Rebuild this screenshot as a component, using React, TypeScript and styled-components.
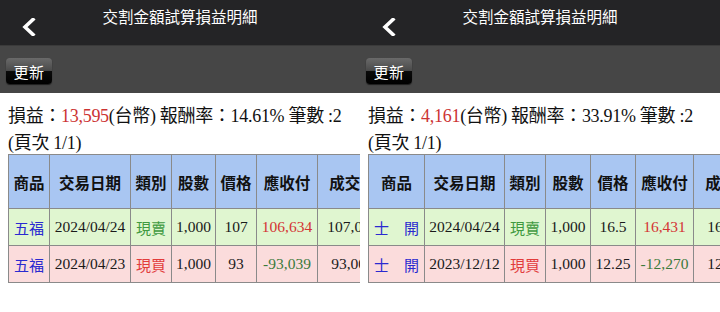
import React from 'react';
import styled, { createGlobalStyle } from 'styled-components';

const GlobalStyle = createGlobalStyle`
  html, body {
    margin: 0;
    padding: 0;
    background: #ffffff;
  }
`;

type Side = 'sell' | 'buy';

interface Trade {
  name: string;
  date: string;
  side: Side;
  qty: string;
  price: string;
  amount: string;
  cost: string;
}

interface PanelData {
  pnl: string;
  rate: string;
  count: number;
  widths: number[];
  rows: Trade[];
}

const headers = ['商品', '交易日期', '類別', '股數', '價格', '應收付', '成交價'];

const panels: PanelData[] = [
  {
    pnl: '13,595',
    rate: '14.61%',
    count: 2,
    widths: [41, 81, 41, 44, 41, 61, 70],
    rows: [
      { name: '五福', date: '2024/04/24', side: 'sell', qty: '1,000', price: '107', amount: '106,634', cost: '107,000' },
      { name: '五福', date: '2024/04/23', side: 'buy', qty: '1,000', price: '93', amount: '-93,039', cost: '93,000' },
    ],
  },
  {
    pnl: '4,161',
    rate: '33.91%',
    count: 2,
    widths: [56, 80, 41, 45, 45, 58, 70],
    rows: [
      { name: '士　開', date: '2024/04/24', side: 'sell', qty: '1,000', price: '16.5', amount: '16,431', cost: '16,500' },
      { name: '士　開', date: '2023/12/12', side: 'buy', qty: '1,000', price: '12.25', amount: '-12,270', cost: '12,250' },
    ],
  },
];

const Page = styled.div`
  display: flex;
  width: 720px;
  height: 312px;
`;

const Screen = styled.div`
  display: flex;
  flex-direction: column;
  width: 360px;
  height: 312px;
  overflow: hidden;
  background: #ffffff;
`;

const NavBar = styled.div`
  display: grid;
  grid-template-columns: 1fr auto 1fr;
  height: 45px;
  background: #242426;
  box-sizing: border-box;
`;

const BackButton = styled.div`
  padding: 18px 0 0 22px;
  line-height: 0;
`;

const Title = styled.div`
  padding-top: 6px;
  color: #ffffff;
  font-family: 'Noto Sans CJK TC', 'Noto Sans', sans-serif;
  font-size: 15.5px;
  line-height: 20px;
`;

const Toolbar = styled.div`
  display: flex;
  align-items: center;
  height: 48px;
  padding-left: 6px;
  background: #464646;
  border-top: 1px solid #3a3a3a;
  box-sizing: border-box;
`;

const RefreshButton = styled.div`
  display: flex;
  align-items: center;
  justify-content: center;
  width: 46px;
  height: 26px;
  margin-top: 3px;
  border-radius: 4px;
  background: linear-gradient(
    to bottom,
    #6a6a6a 0%,
    #4a4a4a 48%,
    #0a0a0a 52%,
    #000000 100%
  );
  box-shadow: 0 1px 1px rgba(0, 0, 0, 0.6);
  color: #ffffff;
  font-family: 'Noto Sans CJK TC', sans-serif;
  font-size: 15px;
  letter-spacing: 0.5px;
`;

const Summary = styled.div`
  height: 61px;
  padding: 10px 8px 0;
  box-sizing: border-box;
  color: #111111;
  font-family: 'Liberation Serif', 'Noto Sans CJK TC', serif;
  font-size: 18px;
  line-height: 27px;
  letter-spacing: -0.3px;
  white-space: nowrap;
  flex-shrink: 0;
`;

const Red = styled.span`
  color: #cc3333;
`;

const Grid = styled.table<{ $width: number }>`
  width: ${(p) => p.$width}px;
  margin: 0 0 0 8px;
  border-collapse: collapse;
  table-layout: fixed;
  flex-shrink: 0;
`;

const Col = styled.col<{ $w: number }>`
  width: ${(p) => p.$w}px;
`;

const HeadCell = styled.th`
  height: 53px;
  padding: 0 2px;
  border: 1px solid #8a8a8a;
  background: #a9c6f2;
  color: #111111;
  font-family: 'Noto Sans CJK TC', sans-serif;
  font-size: 15.5px;
  font-weight: 700;
  text-align: center;
  white-space: nowrap;
  overflow: hidden;
`;

const Row = styled.tr<{ $side: Side }>`
  background: ${(p) => (p.$side === 'sell' ? '#e0f6d0' : '#fbdcdc')};
`;

const Cell = styled.td`
  height: 36px;
  padding: 0 2px;
  border: 1px solid #8a8a8a;
  color: #1a1a1a;
  font-family: 'Liberation Serif', 'Noto Sans CJK TC', serif;
  font-size: 15.5px;
  text-align: center;
  white-space: nowrap;
  overflow: hidden;
`;

const NameCell = styled(Cell)`
  color: #2a2ad0;
  font-family: 'Noto Sans CJK TC', sans-serif;
  font-size: 15px;
`;

const SideCell = styled(Cell)<{ $side: Side }>`
  color: ${(p) => (p.$side === 'sell' ? '#3f9a3f' : '#e23b3b')};
  font-family: 'Noto Sans CJK TC', sans-serif;
  font-size: 15px;
`;

const AmountCell = styled(Cell)<{ $neg: boolean }>`
  color: ${(p) => (p.$neg ? '#3b7a3b' : '#d43434')};
`;

const Chevron = () => (
  <svg width="14" height="18" viewBox="0 0 14 18">
    <polyline
      points="11,1.5 3,9 11,16.5"
      fill="none"
      stroke="#ffffff"
      strokeWidth="3.6"
      strokeLinecap="square"
    />
  </svg>
);

const Panel = ({ data }: { data: PanelData }) => {
  const total = data.widths.reduce((a, b) => a + b, 0);
  return (
    <Screen>
      <NavBar>
        <BackButton>
          <Chevron />
        </BackButton>
        <Title>交割金額試算損益明細</Title>
        <div />
      </NavBar>
      <Toolbar>
        <RefreshButton>更新</RefreshButton>
      </Toolbar>
      <Summary>
        損益：<Red>{data.pnl}</Red>(台幣) 報酬率：{data.rate} 筆數 :{data.count}
        <br />
        (頁次 1/1)
      </Summary>
      <Grid $width={total}>
        <colgroup>
          {data.widths.map((w, i) => (
            <Col key={i} $w={w} />
          ))}
        </colgroup>
        <thead>
          <tr>
            {headers.map((h) => (
              <HeadCell key={h}>{h}</HeadCell>
            ))}
          </tr>
        </thead>
        <tbody>
          {data.rows.map((r, i) => (
            <Row key={i} $side={r.side}>
              <NameCell>{r.name}</NameCell>
              <Cell>{r.date}</Cell>
              <SideCell $side={r.side}>{r.side === 'sell' ? '現賣' : '現買'}</SideCell>
              <Cell>{r.qty}</Cell>
              <Cell>{r.price}</Cell>
              <AmountCell $neg={r.amount.startsWith('-')}>{r.amount}</AmountCell>
              <Cell>{r.cost}</Cell>
            </Row>
          ))}
        </tbody>
      </Grid>
    </Screen>
  );
};

export default function App() {
  return (
    <Page>
      <GlobalStyle />
      {panels.map((p, i) => (
        <Panel key={i} data={p} />
      ))}
    </Page>
  );
}
